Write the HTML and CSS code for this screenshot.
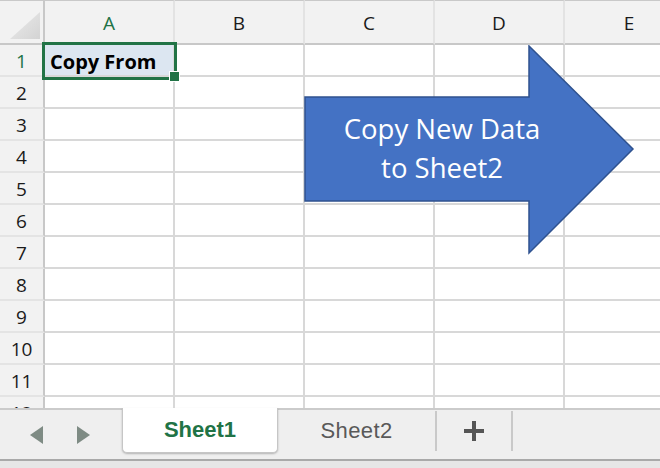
FILE: index.html
```html
<!DOCTYPE html>
<html lang="en">
<head>
  <meta charset="UTF-8">
  <meta name="viewport" content="width=device-width, initial-scale=1">
  <title>Sheet1</title>
  <link rel="stylesheet" href="styles.css">
</head>
<body>

  <div class="workbook">
    <div class="sheet">
      <div class="grid">
        <div class="corner"><span class="corner-mark"></span></div>
        <div class="col-head active">A</div>
        <div class="col-head">B</div>
        <div class="col-head">C</div>
        <div class="col-head">D</div>
        <div class="col-head">E</div>

        <div class="row-head active">1</div>
        <div class="cell selected">Copy From</div><div class="cell"></div><div class="cell"></div><div class="cell"></div><div class="cell"></div>
        <div class="row-head">2</div>
        <div class="cell"></div><div class="cell"></div><div class="cell"></div><div class="cell"></div><div class="cell"></div>
        <div class="row-head">3</div>
        <div class="cell"></div><div class="cell"></div><div class="cell"></div><div class="cell"></div><div class="cell"></div>
        <div class="row-head">4</div>
        <div class="cell"></div><div class="cell"></div><div class="cell"></div><div class="cell"></div><div class="cell"></div>
        <div class="row-head">5</div>
        <div class="cell"></div><div class="cell"></div><div class="cell"></div><div class="cell"></div><div class="cell"></div>
        <div class="row-head">6</div>
        <div class="cell"></div><div class="cell"></div><div class="cell"></div><div class="cell"></div><div class="cell"></div>
        <div class="row-head">7</div>
        <div class="cell"></div><div class="cell"></div><div class="cell"></div><div class="cell"></div><div class="cell"></div>
        <div class="row-head">8</div>
        <div class="cell"></div><div class="cell"></div><div class="cell"></div><div class="cell"></div><div class="cell"></div>
        <div class="row-head">9</div>
        <div class="cell"></div><div class="cell"></div><div class="cell"></div><div class="cell"></div><div class="cell"></div>
        <div class="row-head">10</div>
        <div class="cell"></div><div class="cell"></div><div class="cell"></div><div class="cell"></div><div class="cell"></div>
        <div class="row-head">11</div>
        <div class="cell"></div><div class="cell"></div><div class="cell"></div><div class="cell"></div><div class="cell"></div>
        <div class="row-head">12</div>
        <div class="cell"></div><div class="cell"></div><div class="cell"></div><div class="cell"></div><div class="cell"></div>
      </div>

      <!-- selected cell A1 -->
      <div class="selection"><span class="fill-handle"></span></div>

      <!-- arrow shape drawn over the grid -->
      <div class="callout">
        <svg class="callout-shape" width="334" height="212" viewBox="0 0 334 212">
          <polygon points="2,52 226,52 226,1 330,104 226,208 226,156 2,156" fill="#4472c4" stroke="#2f528f" stroke-width="1.5"/>
        </svg>
        <div class="callout-text">Copy New Data<br>to Sheet2</div>
      </div>
    </div>

    <div class="tabbar">
      <div class="tabstrip">
        <div class="tab-nav">
          <svg width="14" height="18" viewBox="0 0 14 18"><polygon points="13,0 13,18 0,9" fill="#7e8b84"/></svg>
          <svg width="14" height="18" viewBox="0 0 14 18"><polygon points="1,0 1,18 14,9" fill="#7e8b84"/></svg>
        </div>
        <div class="tab current">Sheet1</div>
        <div class="tab">Sheet2</div>
        <div class="tab add">
          <svg width="20" height="20" viewBox="0 0 20 20"><rect x="0" y="8" width="20" height="4" fill="#555"/><rect x="8" y="0" width="4" height="20" fill="#555"/></svg>
        </div>
      </div>
      <div class="statusline"></div>
    </div>
  </div>

</body>
</html>
```

FILE: styles.css
```css
body {
  margin: 0;
  background: #fff;
  font-family: "Open Sans", "Liberation Sans", sans-serif;
  color: #1a1a1a;
}

.workbook {
  width: 660px;
  height: 468px;
  overflow: hidden;
}

.sheet {
  position: relative;
  height: 408px;
  overflow: hidden;
}

.grid {
  display: grid;
  grid-template-columns: 45px repeat(5, 130px);
  grid-template-rows: 45px;
  grid-auto-rows: 32px;
  width: 695px;
}

.corner, .col-head {
  background-color: #f2f2f2;
  border-top: 1px solid #c9c9c9;
  border-bottom: 2px solid #c8c8c8;
  box-sizing: border-box;
}

.corner {
  position: relative;
  border-right: 2px solid #c8c8c8;
}

.corner-mark {
  position: absolute;
  left: 10px;
  top: 11px;
  width: 30px;
  height: 27px;
  background: linear-gradient(135deg, #ececec, #d3d3d3);
  clip-path: polygon(100% 0, 100% 100%, 0 100%);
}

.col-head {
  display: flex;
  align-items: center;
  justify-content: center;
  border-right: 2px solid #e3e3e3;
  font-size: 19px;
  padding-top: 1px;
}

.col-head.active, .row-head.active {
  color: #217346;
}

.row-head {
  display: flex;
  align-items: center;
  justify-content: center;
  background-color: #f2f2f2;
  border-right: 2px solid #c8c8c8;
  border-bottom: 2px solid #e4e4e4;
  box-sizing: border-box;
  font-size: 19px;
  padding-top: 1px;
}

.cell {
  border-right: 2px solid #d8d8d8;
  border-bottom: 2px solid #d8d8d8;
  box-sizing: border-box;
  display: flex;
  align-items: center;
  padding: 0 5px;
  white-space: nowrap;
}

.cell.selected {
  background-color: #dce6f1;
  font-weight: 700;
  font-size: 20px;
  padding-top: 2px;
  color: #000;
}

.selection {
  position: absolute;
  left: 42px;
  top: 42px;
  width: 135px;
  height: 38px;
  border: 3px solid #217346;
  box-sizing: border-box;
}

.fill-handle {
  position: absolute;
  right: -6px;
  bottom: -5px;
  width: 11px;
  height: 11px;
  box-sizing: border-box;
  border: 1px solid #fff;
  background-color: #217346;
}

.callout {
  position: absolute;
  left: 303px;
  top: 45px;
  width: 334px;
  height: 212px;
}

.callout-shape {
  display: block;
}

.callout-text {
  position: absolute;
  left: 2px;
  top: 64px;
  width: 274px;
  text-align: center;
  color: #fff;
  font-size: 27.5px;
  line-height: 39px;
}

.tabbar {
  height: 60px;
  display: flex;
  flex-direction: column;
}

.tabstrip {
  height: 51px;
  display: flex;
  align-items: flex-start;
  background-color: #efefef;
  border-top: 2px solid #cbcbcb;
  box-sizing: border-box;
}

.tab-nav {
  width: 122px;
  height: 49px;
  display: flex;
  align-items: center;
  gap: 32px;
  padding-left: 30px;
  box-sizing: border-box;
}

.tab {
  display: flex;
  align-items: center;
  justify-content: center;
  width: 159px;
  height: 40px;
  margin-top: 1px;
  border-right: 2px solid #c9c9c9;
  box-sizing: border-box;
  font-family: "Liberation Sans", Arial, sans-serif;
  font-size: 22px;
  letter-spacing: 0.4px;
  color: #595959;
}

.tab.current {
  width: 156px;
  height: 45px;
  margin-top: -2px;
  background-color: #fff;
  border: 1px solid #c6c6c6;
  border-top: none;
  border-radius: 0 0 5px 5px;
  box-shadow: 0 1px 2px rgba(0, 0, 0, 0.25);
  font-weight: 700;
  letter-spacing: 0;
  color: #217346;
}

.tab.add {
  width: 76px;
}

.statusline {
  flex: 1;
  background-color: #e6e6e6;
  border-top: 2px solid #a9a9a9;
}
```
